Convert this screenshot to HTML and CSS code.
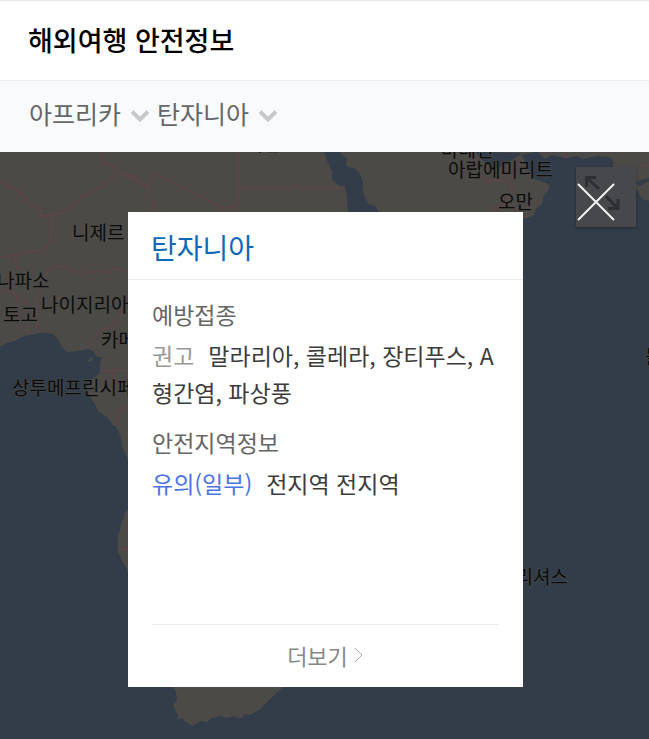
FILE: index.html
```
<!DOCTYPE html>
<html lang="ko">
<head>
    <meta charset="UTF-8">
    <meta name="viewport" content="width=device-width, initial-scale=1.0">
    <title>해외여행 안전정보</title>
    <link rel="stylesheet" href="styles.css">
</head>
<body>
    <header class="header">
        <h1>해외여행 안전정보</h1>
    </header>

    <div class="filter-bar">
        <div class="select-box">
            <select id="continent" aria-label="대륙">
                <option>아프리카</option>
            </select>
            <svg class="chevron" viewBox="0 0 20 14" aria-hidden="true"><path d="M2 2.5l8 8 8-8"/></svg>
        </div>
        <div class="select-box">
            <select id="country" aria-label="국가">
                <option>탄자니아</option>
            </select>
            <svg class="chevron" viewBox="0 0 20 14" aria-hidden="true"><path d="M2 2.5l8 8 8-8"/></svg>
        </div>
    </div>

    <main class="map-area">
        <svg class="map" viewBox="0 152 649 587" preserveAspectRatio="xMidYMid slice" aria-hidden="true">
            <!-- africa and arabia -->
            <path class="land" d="M0 152H535L522 155L526 165L530 173L534 179L541 181L550 185L548 191L544 195L542 204L537 208L533 216L523 219L400 300L380 500L283 687L267 702L261 709L255 712L250 715L245 714L242 718L237 718L234 716L227 718L221 716L212 718L207 722L201 721L192 726L186 722L182 718L177 720L178 715L173 705L177 700L176 692L173 687L140 620L127 569L123 563L120 556L118 552L118 535L120 531L121 523L124 518L125 513L135 500L127 457L122 446L121 437L117 428L112 423L107 417L98 411L95 404L92 400L87 390L88 383L95 377L99 374L100 370L100 365L102 357L97 357L93 351L89 349L78 351L67 352L62 347L57 338L53 334L47 333L40 333L30 335L20 338L15 341L10 342L0 346Z"/>
            <path class="land" d="M538 152L545 159L552 155L566 158L577 156L583 159L597 156L609 157L613 160L613 168L620 178L626 184L637 190L642 199L649 201V152Z"/>
            <!-- red sea, gulf and inlets -->
            <path class="water" d="M324 152L330 168L332 171L332 180L337 184L345 188L347 195L348 212V230H390L379 212L375 206L369 204L365 198L363 190L363 182L360 174L356 169L348 167L346 164L347 158L342 155L340 152Z"/>
            <path class="water" d="M475 152L480 158L488 165L493 170L505 165L512 160L522 153Z"/>
            <path class="water" d="M634 183L641 180L649 178V181L640 186Z"/>
            <path class="land" d="M88 361L91 357L93 359L90 362Z"/>
            <!-- borders -->
            <g class="border-glow">
                <path id="borders" d="M0 181L20 193L27 202L41 210V216L52 215L65 212L80 199L103 185L120 173L148 187L155 174L192 192L225 209L230 207H238V152M101 152L104 162L114 166L120 173L134 177L141 182L148 187L149 194L155 204L152 213M237 188H291L295 186L299 188H345M51 215V231L50 242L45 250L28 252L14 255L0 258M14 255L17 266L22 270M42 285L48 270L55 266L66 267L73 272L81 270L88 273L97 270L105 273L115 269L127 271M42 285L37 297L37 332M0 291L13 292L18 298L16 311L20 320L20 330M20 295L27 304L28 333M90 347L91 340L102 330L112 326L118 318L124 310L126 297M101 371L127 370M113 372V382H127M113 425L118 419L117 412L124 409L127 404M480 175L486 182L495 180L510 183L512 190L505 203L490 210M512 180L516 167L521 160M565 152V158M640 166L649 164M118 549H128"/>
            </g>
            <use href="#borders" class="border"/>
            <g class="labels">
                <text x="72" y="240">니제르</text>
                <text x="-3" y="288">나파소</text>
                <text x="3" y="322">토고</text>
                <text x="41" y="312">나이지리아</text>
                <text x="101" y="347">카메룬</text>
                <text x="12" y="395">상투메프린시페</text>
                <text x="246" y="151">이집트</text>
                <text x="441" y="157">바레인</text>
                <text x="448" y="177">아랍에미리트</text>
                <text x="498" y="209">오만</text>
                <text x="498" y="584">모리셔스</text>
                <text x="645" y="364">몰디브</text>
            </g>
        </svg>

        <button class="expand-btn" type="button" aria-label="지도 크게 보기">
            <svg viewBox="0 0 60 60" aria-hidden="true">
                <path d="M23 22L11 11M10.500 20V10.500H20M30 29L41 41M42 32V41.500H32"/>
            </svg>
        </button>
        <button class="close-btn" type="button" aria-label="닫기">
            <svg viewBox="0 0 38 38" aria-hidden="true"><path d="M1 1L37 37M37 1L1 37"/></svg>
        </button>

        <section class="popup">
            <h2>탄자니아</h2>
            <div class="popup-body">
                <h3>예방접종</h3>
                <p><span class="tag">권고</span>말라리아, 콜레라, 장티푸스, A형간염, 파상풍</p>
                <h3>안전지역정보</h3>
                <p><span class="tag caution">유의(일부)</span>전지역 전지역</p>
            </div>
            <a class="more" href="#">더보기
                <svg viewBox="0 0 10 16" aria-hidden="true"><path d="M1 1l7 7-7 7"/></svg>
            </a>
        </section>
    </main>
</body>
</html>
```
FILE: styles.css
```
* {
    box-sizing: border-box;
    margin: 0;
    padding: 0;
}
body {
    display: flex;
    flex-direction: column;
    min-height: 100vh;
    font-family: 'Noto Sans CJK KR', sans-serif;
    color: #3c3c3c;
    background-color: #fff;
}
button, select {
    font-family: inherit;
    border: none;
    background: none;
    cursor: pointer;
}
svg {
    fill: none;
}

/* Header */
.header {
    padding: 19px 28px 21px;
    border-top: 1px solid #e5e5e5;
}
.header h1 {
    font-size: 27px;
    line-height: 39px;
    font-weight: 500;
    color: #000;
}
.filter-bar {
    display: flex;
    padding: 13px 29px 20px;
    background-color: #f8fafc;
    border-top: 1px solid #eceef0;
}
.select-box {
    position: relative;
}
.select-box select {
    display: block;
    height: 38px;
    padding-right: 35px;
    font-size: 25px;
    line-height: 38px;
    color: #666;
    appearance: none;
}
.chevron {
    position: absolute;
    top: 15px;
    right: 7px;
    width: 20px;
    height: 14px;
    stroke: #c8c9cb;
    stroke-width: 4;
    pointer-events: none;
}

/* Map */
.map-area {
    position: relative;
    flex: 1;
    padding: 60px 126px 52px 128px;
    background-color: #323d49;
    overflow: hidden;
}
.map {
    position: absolute;
    top: 0;
    left: 0;
    width: 100%;
    height: 100%;
}
.land {
    fill: #4b4a47;
}
.water {
    fill: #323d49;
}
.border {
    stroke: #5c484a;
    stroke-width: 1;
}
.border-glow {
    stroke: #504746;
    stroke-width: 4;
}
.labels {
    font-size: 19px;
    fill: #0c0c0c;
    stroke: rgba(75, 74, 71, 0.5);
    stroke-width: 2;
    paint-order: stroke;
}
.expand-btn {
    position: absolute;
    top: 15px;
    right: 13px;
    width: 60px;
    height: 60px;
    background-color: #47484b;
    box-shadow: 0 1px 3px rgba(0, 0, 0, 0.3);
}
.expand-btn svg {
    display: block;
    stroke: #2d2f32;
    stroke-width: 3;
}
.close-btn {
    position: absolute;
    top: 31px;
    right: 34px;
    width: 38px;
    height: 38px;
}
.close-btn svg {
    display: block;
    stroke: #f2f2f2;
    stroke-width: 2;
}

/* Country popup */
.popup {
    position: relative;
    display: flex;
    flex-direction: column;
    min-height: 475px;
    background-color: #fff;
}
.popup h2 {
    padding: 15px 23px 11px;
    font-size: 28px;
    line-height: 41px;
    font-weight: 400;
    color: #0f68b8;
    border-bottom: 1px solid #e9eef0;
}
.popup-body {
    flex: 1;
    padding: 16px 24px 0;
}
.popup-body h3 {
    font-size: 23px;
    line-height: 37px;
    font-weight: 400;
    color: #666;
}
.popup-body p {
    margin: 4px 0 13px;
    font-size: 23px;
    line-height: 37px;
    word-break: break-all;
}
.tag {
    margin-right: 14px;
    color: #999;
}
.tag.caution {
    color: #4c73e6;
}
.more {
    display: flex;
    align-items: center;
    justify-content: center;
    gap: 6px;
    margin: 0 24px;
    padding-bottom: 2px;
    height: 63px;
    font-size: 22px;
    color: #888;
    text-decoration: none;
    border-top: 1px solid #e9eef0;
}
.more svg {
    width: 10px;
    height: 16px;
    stroke: #aaa;
    stroke-width: 1;
}
```
